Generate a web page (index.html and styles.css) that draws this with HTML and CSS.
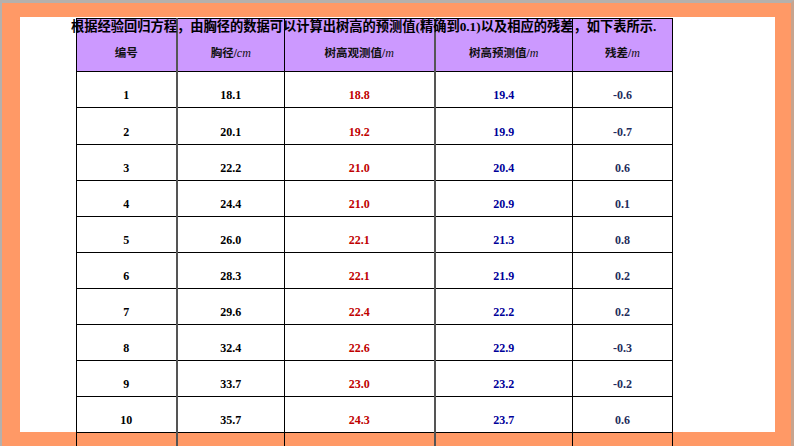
FILE: index.html
```html
<!DOCTYPE html>
<html lang="zh">
<head>
<meta charset="utf-8">
<title>残差表</title>
<link rel="stylesheet" href="styles.css">
</head>
<body>
<div class="slide">
  <div class="panel">
    <table class="data">
      <colgroup>
        <col class="c1"><col class="c2"><col class="c3"><col class="c4"><col class="c5">
      </colgroup>
      <thead>
        <tr>
          <th class="sep">编号</th>
          <th>胸径/<i>cm</i></th>
          <th class="sep">树高观测值/<i>m</i></th>
          <th>树高预测值/<i>m</i></th>
          <th>残差/<i>m</i></th>
        </tr>
      </thead>
      <tbody>
        <tr><td class="sep">1</td><td>18.1</td><td class="sep obs">18.8</td><td class="pre">19.4</td><td class="res">-0.6</td></tr>
        <tr><td class="sep">2</td><td>20.1</td><td class="sep obs">19.2</td><td class="pre">19.9</td><td class="res">-0.7</td></tr>
        <tr><td class="sep">3</td><td>22.2</td><td class="sep obs">21.0</td><td class="pre">20.4</td><td class="res">0.6</td></tr>
        <tr><td class="sep">4</td><td>24.4</td><td class="sep obs">21.0</td><td class="pre">20.9</td><td class="res">0.1</td></tr>
        <tr><td class="sep">5</td><td>26.0</td><td class="sep obs">22.1</td><td class="pre">21.3</td><td class="res">0.8</td></tr>
        <tr><td class="sep">6</td><td>28.3</td><td class="sep obs">22.1</td><td class="pre">21.9</td><td class="res">0.2</td></tr>
        <tr><td class="sep">7</td><td>29.6</td><td class="sep obs">22.4</td><td class="pre">22.2</td><td class="res">0.2</td></tr>
        <tr><td class="sep">8</td><td>32.4</td><td class="sep obs">22.6</td><td class="pre">22.9</td><td class="res">-0.3</td></tr>
        <tr><td class="sep">9</td><td>33.7</td><td class="sep obs">23.0</td><td class="pre">23.2</td><td class="res">-0.2</td></tr>
        <tr><td class="sep">10</td><td>35.7</td><td class="sep obs">24.3</td><td class="pre">23.7</td><td class="res">0.6</td></tr>
        <tr><td class="sep"></td><td></td><td class="sep obs"></td><td class="pre"></td><td class="res"></td></tr>
      </tbody>
    </table>
    <p class="title">根据经验回归方程，由胸径的数据可以计算出树高的预测值(精确到0.1)以及相应的残差，如下表所示.</p>
  </div>
</div>
</body>
</html>
```
FILE: styles.css
```css
html, body {
  margin: 0;
  padding: 0;
  overflow: hidden;
}
body {
  width: 794px;
  height: 446px;
  box-sizing: border-box;
  background: #ff9966;
  border-top: 3px solid #b5b0ac;
  border-left: 2px solid #b5b0ac;
  border-right: 3px solid #c8a48e;
  font-family: "Liberation Serif", "Noto Sans CJK SC", serif;
}
.slide {
  padding: 14px 0 0 18px;
}
.panel {
  position: relative;
  width: 755px;
  height: 415px;
  background: #ffffff;
}
.data {
  border-collapse: collapse;
  margin-left: 56px;
  position: relative;
  top: 1px;
  table-layout: fixed;
  width: 597px;
}
.c1 { width: 100px; }
.c2 { width: 108px; }
.c3 { width: 150px; }
.c4 { width: 138px; }
.c5 { width: 100px; }
.data th, .data td {
  border: 1px solid #000;
  text-align: center;
  font-weight: bold;
  padding: 0;
}
.data th {
  background: #cc99ff;
  height: 53px;
  padding-top: 14px;
  box-sizing: border-box;
  font-size: 11.5px;
  color: #111;
}
.data th i {
  font-family: "Liberation Serif", serif;
  font-style: italic;
  font-weight: normal;
  font-size: 12px;
}
.data tbody tr {
  height: 36px;
}
.data tbody tr:nth-child(2) {
  height: 37px;
}
.data td {
  padding-top: 12px;
  box-sizing: border-box;
  font-size: 12px;
  color: #000;
}
.data .sep {
  border-right: 2px solid #555;
}
.data .obs { color: #c00000; }
.data .pre { color: #000099; }
.data .res { color: #1f2d5c; }
.title {
  position: absolute;
  left: 51px;
  top: 1px;
  margin: 0;
  font-size: 13.25px;
  line-height: 18px;
  font-weight: bold;
  color: #000;
  white-space: nowrap;
  font-family: "Liberation Serif", "Noto Sans CJK SC", serif;
}
```
